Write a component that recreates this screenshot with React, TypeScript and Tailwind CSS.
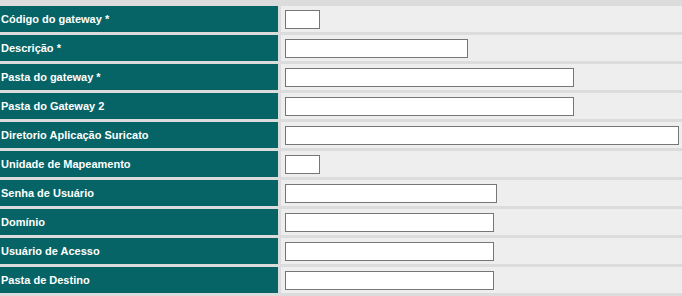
const fields = [
  { label: "Código do gateway *", width: "w-[35px]" },
  { label: "Descrição *", width: "w-[183px]" },
  { label: "Pasta do gateway *", width: "w-[289px]" },
  { label: "Pasta do Gateway 2", width: "w-[289px]" },
  { label: "Diretorio Aplicação Suricato", width: "w-[394px]" },
  { label: "Unidade de Mapeamento", width: "w-[35px]" },
  { label: "Senha de Usuário", width: "w-[212px]" },
  { label: "Domínio", width: "w-[209px]" },
  { label: "Usuário de Acesso", width: "w-[209px]" },
  { label: "Pasta de Destino", width: "w-[209px]" },
];

export default function App() {
  return (
    <div className="w-[682px] h-[296px] bg-[#dcdcdc] pt-[6px] overflow-hidden font-['Liberation_Sans',Arial,sans-serif]">
      <div className="flex flex-col gap-[3px]">
        {fields.map((f) => (
          <div key={f.label} className="flex gap-[3px] h-[26px]">
            <div className="w-[278px] shrink-0 bg-[#066466] flex items-center pl-px text-white text-[11px] font-bold">
              {f.label}
            </div>
            <div className="flex-1 bg-[#eeeeee] flex items-center pl-[4px]">
              <input
                type={f.label === "Senha de Usuário" ? "password" : "text"}
                className={`${f.width} h-[19px] bg-white border border-[#767676] outline-none`}
              />
            </div>
          </div>
        ))}
      </div>
    </div>
  );
}
